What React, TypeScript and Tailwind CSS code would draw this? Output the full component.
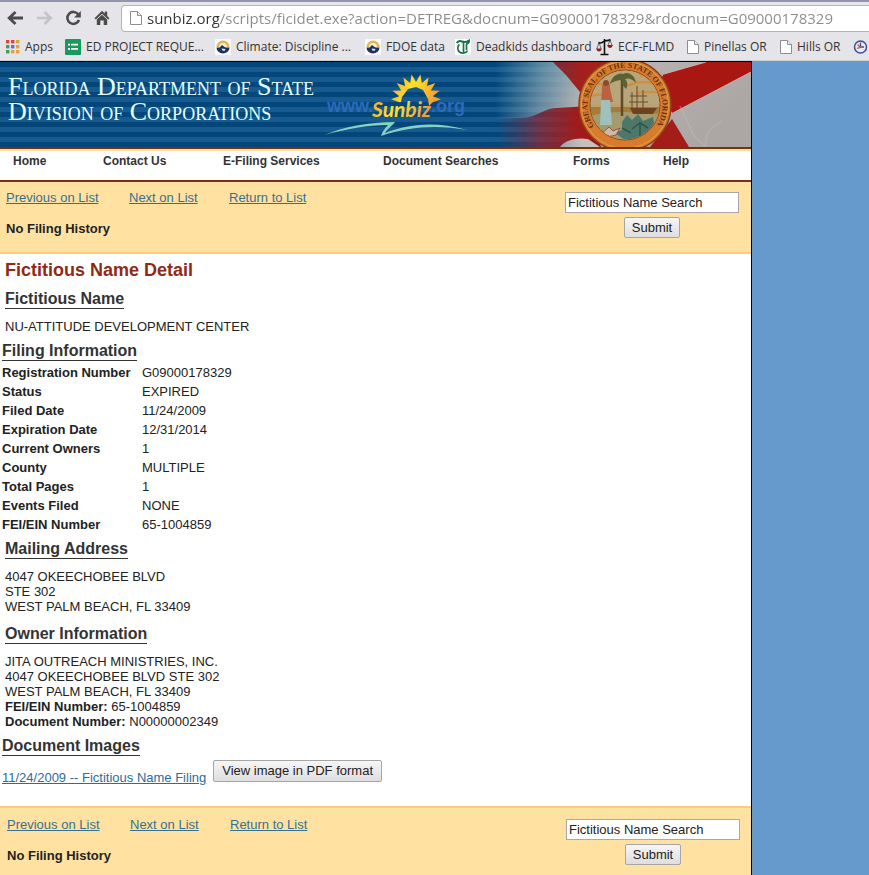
import React from 'react';

const bookmarks = [
    { label: 'Apps', icon: 'apps', width: 'w-[59px]' },
    { label: 'ED PROJECT REQUE...', icon: 'forms', width: 'w-[150px]' },
    { label: 'Climate: Discipline ...', icon: 'fdoe', width: 'w-[150px]' },
    { label: 'FDOE data', icon: 'fdoe', width: 'w-[90px]' },
    { label: 'Deadkids dashboard', icon: 'times', width: 'w-[141px]' },
    { label: 'ECF-FLMD', icon: 'scales', width: 'w-[91px]' },
    { label: 'Pinellas OR', icon: 'page', width: 'w-[93px]' },
    { label: 'Hills OR', icon: 'page', width: 'w-[73px]' },
    { label: '', icon: 'clock', width: 'w-[16px]' },
];

const navItems = [
    { label: 'Home', width: 'w-[90px]' },
    { label: 'Contact Us', width: 'w-[120px]' },
    { label: 'E-Filing Services', width: 'w-[160px]' },
    { label: 'Document Searches', width: 'w-[190px]' },
    { label: 'Forms', width: 'w-[90px]' },
    { label: 'Help', width: 'w-[60px]' },
];

const filing = [
    ['Registration Number', 'G09000178329'],
    ['Status', 'EXPIRED'],
    ['Filed Date', '11/24/2009'],
    ['Expiration Date', '12/31/2014'],
    ['Current Owners', '1'],
    ['County', 'MULTIPLE'],
    ['Total Pages', '1'],
    ['Events Filed', 'NONE'],
    ['FEI/EIN Number', '65-1004859'],
];

const appColors = ['#d9483b', '#d9483b', '#e2a33a', '#4c9a5b', '#3f7fd0', '#e2a33a', '#4c9a5b', '#e2a33a', '#e2a33a'];

function PageIcon() {
    return (
        <svg width="12" height="16" viewBox="0 0 12 16" className="shrink-0">
            <path d="M.5 1.5h7l4 4v9H.5z" fill="#fff" stroke="#8d8d8d" />
            <path d="M7.5 1.5v4h4" fill="#eee" stroke="#8d8d8d" />
        </svg>
    );
}

function BookmarkIcon({ name }: { name: string }) {
    if (name === 'page') return <PageIcon />;
    if (name === 'apps') {
        return (
            <svg width="14" height="14" viewBox="0 0 14 14" className="shrink-0">
                {appColors.map((color, i) => (
                    <rect key={i} x={(i % 3) * 5} y={Math.floor(i / 3) * 5} width="3.4" height="3.4" fill={color} />
                ))}
            </svg>
        );
    }
    if (name === 'forms') {
        return (
            <svg width="16" height="16" viewBox="0 0 16 16" className="shrink-0">
                <rect width="16" height="16" rx="1" fill="#189a5c" />
                <path d="M3 5.7h2M3 9.8h2M6 5.7h7M6 9.8h7" stroke="#fff" strokeWidth="1.8" />
            </svg>
        );
    }
    if (name === 'times') {
        return (
            <svg width="16" height="16" viewBox="0 0 16 16" className="shrink-0">
                <rect width="16" height="16" fill="#fff" />
                <path d="M2 4.2c.5-2.400 3-2.400 5-1.700s4.500.6 7-1c.2 2-1 3.200-3 3.200" fill="none" stroke="#157347" strokeWidth="2" />
                <path d="M4.500 5.500c-2 1-2.500 5.500 0 7.500 2.500 2 7 1 8-1.500M8.500 4v9M11.500 5v6" fill="none" stroke="#157347" strokeWidth="1.700" />
            </svg>
        );
    }
    if (name === 'scales') {
        return (
            <svg width="17" height="18" viewBox="0 0 17 18" className="shrink-0">
                <path d="M8.500 1v15M4.500 16.500h8M2.500 4.500c3 1.500 4-.5 6-1.500s3 .5 6-1.500" fill="none" stroke="#111" strokeWidth="1.600" />
                <path d="M3 4.500L.8 11M3 4.500L5.200 11M14 2l-2.200 6M14 2l2.200 6" fill="none" stroke="#333" strokeWidth=".7" />
                <path d="M.3 10.500h5.400c-.4 4-5 4-5.400 0zM11.300 7h5.400c-.4 4-5 4-5.400 0z" fill="#8c1d18" />
            </svg>
        );
    }
    if (name === 'clock') {
        return (
            <svg width="16" height="16" viewBox="0 0 16 16" className="shrink-0">
                <circle cx="7.500" cy="8" r="6" fill="#e8eaf8" stroke="#3d4f91" strokeWidth="1.500" />
                <path d="M7.500 3.500V8H11" fill="none" stroke="#3d4f91" strokeWidth="1.300" />
                <path d="M4.500 5.500l3 3-3.500.8" fill="none" stroke="#d0582f" strokeWidth="1.300" />
            </svg>
        );
    }
    return (
        <svg width="16" height="16" viewBox="0 0 16 16" className="shrink-0">
            <rect width="16" height="16" fill="#fafafa" />
            <path d="M1.500 8a6.500 6.500 0 0113 0z" fill="#e0b552" />
            <path d="M4 8a4 4 0 018 0z" fill="#f5ecd0" />
            <path d="M1.500 8.500h3L7 6l2.500 2 1.500.5h3.500a6.500 6 0 01-13 0z" fill="#1d3263" />
            <path d="M6.500 9.500l4 .5-1 2-2-.5z" fill="#e8e8ee" />
        </svg>
    );
}

function BrowserBar() {
    return (
        <header className="bg-[#e5e4e8] border-t-2 border-[#9395ac] font-['Open_Sans',sans-serif]">
            <div className="flex items-center h-8 pl-[6px]">
                <button aria-label="Back" className="w-[30px]">
                    <svg width="18" height="16" viewBox="0 0 18 16">
                        <path d="M17 8H4M9.500 2L3.200 8l6.300 6" fill="none" stroke="#4b4b4b" strokeWidth="2.800" />
                    </svg>
                </button>
                <button aria-label="Forward" className="w-[29px]">
                    <svg width="18" height="16" viewBox="0 0 18 16">
                        <path d="M1 8h13M8.500 2l6.300 6-6.300 6" fill="none" stroke="#c4c4c6" strokeWidth="2.600" />
                    </svg>
                </button>
                <button aria-label="Reload" className="w-[29px]">
                    <svg width="17" height="16" viewBox="0 0 17 16">
                        <path d="M13.300 4.500A6 6 0 1014 10" fill="none" stroke="#4b4b4b" strokeWidth="2.600" />
                        <path d="M15.800 1v6.500H9z" fill="#4b4b4b" />
                    </svg>
                </button>
                <button aria-label="Home" className="w-[27px]">
                    <svg width="16" height="16" viewBox="0 0 16 16">
                        <path d="M8 .8L.5 8.300l1.300 1.200L8 3.700l6.200 5.800 1.300-1.200-2.300-2.300V1.500h-2.400v2z" fill="#4b4b4b" />
                        <path d="M2.800 9.500L8 4.800l5.200 4.700V15H9.700v-4.500H6.300V15H2.800z" fill="#4b4b4b" />
                    </svg>
                </button>
                <div className="flex items-center flex-1 min-w-0 h-[27px] pl-2 bg-white border border-r-0 border-[#b4b3b8] rounded-l-sm">
                    <PageIcon />
                    <input
                        aria-label="Address"
                        type="text"
                        defaultValue="sunbiz.org/scripts/ficidet.exe?action=DETREG&docnum=G09000178329&rdocnum=G09000178329"
                        className="flex-1 min-w-0 ml-[5px] text-[15px] leading-6 text-transparent bg-clip-text bg-[linear-gradient(90deg,#333_72px,#8b8b8b_72px)] outline-none"
                    />
                </div>
            </div>
            <nav className="flex items-center h-[27px] pl-[6px] pb-px overflow-hidden border-b border-[#c9d0d6]">
                {bookmarks.map((b, i) => (
                    <a key={i} href="#" aria-label={b.label || 'Bookmark'} className={`flex items-center shrink-0 gap-[5px] ${b.width} text-[12px] leading-4 text-[#333] whitespace-nowrap`}>
                        <BookmarkIcon name={b.icon} />
                        {b.label}
                    </a>
                ))}
            </nav>
        </header>
    );
}

// Pointed rays around the half sun in the logo
const rays = Array.from({ length: 21 }, (_, i) => {
    const angle = Math.PI * (1.06 - (i / 20) * 1.12);
    const r = i % 2 === 0 ? 17 : 25;
    return `${416 + r * Math.cos(angle)},${37 - r * Math.sin(angle)}`;
}).join(' ');

function BannerArt() {
    return (
        <svg viewBox="0 0 751 85" preserveAspectRatio="xMaxYMid slice" className="absolute inset-0 w-full h-full" aria-hidden="true">
            <defs>
                <linearGradient id="flagFade" x1="0" x2="1">
                    <stop offset="0" stopColor="#fff" stopOpacity="0" />
                    <stop offset=".18" stopColor="#fff" stopOpacity=".6" />
                    <stop offset=".34" stopColor="#fff" />
                </linearGradient>
                <mask id="flagMask">
                    <rect x="495" width="256" height="85" fill="url(#flagFade)" />
                </mask>
                <linearGradient id="cloth" x1="0" x2="1" y2=".4">
                    <stop offset="0" stopColor="#7fb0bd" />
                    <stop offset=".45" stopColor="#b9b4b3" />
                    <stop offset="1" stopColor="#aca6a4" />
                </linearGradient>
                <linearGradient id="red" x1="0" x2="1">
                    <stop offset="0" stopColor="#7d2c3e" />
                    <stop offset=".4" stopColor="#b3201f" />
                    <stop offset="1" stopColor="#9f1512" />
                </linearGradient>
                <linearGradient id="sun" x1="0" x2="1" y2=".3">
                    <stop offset="0" stopColor="#f39a32" />
                    <stop offset=".5" stopColor="#ffe32a" />
                    <stop offset="1" stopColor="#f3a032" />
                </linearGradient>
            </defs>
            <g mask="url(#flagMask)">
                <rect x="495" width="256" height="85" fill="url(#cloth)" />
                <path d="M553 0h58l12 40-43-10-14-17z" fill="#a51f1c" />
                <path d="M664 12L706 0h45v10l-78 41-22-20z" fill="#a91713" />
                <path d="M495 58c18-3 28-1 38-4 8-3 14-8 24-8 10-1 22-1 32-2l12 41h-106z" fill="url(#red)" />
                <path d="M560 85c4-7 18-10 28-8l12 8z" fill="#c5bfbd" />
                <path d="M650 85l22-28 17 28z" fill="#a51d18" />
                <path d="M680 44l14 30 12 11M706 85c-2-12 4-20 16-26" fill="none" stroke="#c4bfbd" strokeWidth="1.500" opacity=".4" />
                <path d="M706 0l-42 12M751 10l-78 41" stroke="#d6a9a4" strokeWidth="1" />
            </g>
            <circle cx="625" cy="43" r="46" fill="#d77c2d" stroke="#8d3f19" strokeWidth="1.500" />
            <circle cx="625" cy="43" r="43.500" fill="none" stroke="#e8a14c" strokeWidth="1" />
            <circle cx="625" cy="43" r="35" fill="#b9a173" stroke="#8f4a1c" strokeWidth="1" />
            <clipPath id="sealClip"><circle cx="625" cy="43" r="34.500" /></clipPath>
            <g clipPath="url(#sealClip)">
                <path d="M590 8h70v34h-70z" fill="#b9a57a" />
                <path d="M628 24c12-8 22 0 34-6M640 14c8-3 14 4 20 2M636 32c8-4 16 0 24-3M592 24c8-4 14 0 18-4M592 34c6-3 8 0 12-2" fill="none" stroke="#d1903f" strokeWidth="2.500" />
                <path d="M590 45h70v10h-70z" fill="#a47c3a" />
                <path d="M590 54c20-6 46-4 70-2v30h-70z" fill="#a39a70" />
                <path d="M622 16v38" stroke="#5f4a26" strokeWidth="2.500" />
                <path d="M610 22c2-9 10-12 13-10 6-3 12 2 13 9-5-5-8-5-11-4 3 3 3 7 1 10-3-3-5-6-4-9-4 0-8 1-12 4z" fill="#5b6134" />
                <path d="M637 24v24M643 28v20M632 30v18M630 34h17M629 40h19" stroke="#6b4a25" strokeWidth="1" />
                <path d="M630 46h27l-4 6h-20z" fill="#70401f" />
                <path d="M602 26c0-8 9-8 8 0l3 14h-12z" fill="#bd6240" />
                <path d="M601 38h9l2 25h-12z" fill="#9fc0bb" />
                <circle cx="606" cy="21" r="3" fill="#8d4a2e" />
                <path d="M622 60l5-7 5 5 6-6 5 7 10-4 2 12-8 13-22-2-10-7 7-3z" fill="#4d7768" />
                <path d="M632 67l8-6 8 5M640 61v13M622 66l9 5" fill="none" stroke="#2f5648" strokeWidth="1.500" />
                <path d="M601 72l8-7 4 4 7-3-4 7-9 2z" fill="#d2b7a4" stroke="#7d3827" strokeWidth=".7" />
            </g>
            <path id="sealRing" d="M601.500 72.500a37.500 37.500 0 1147 0" fill="none" />
            <text fontFamily="Liberation Serif, serif" fontSize="8" fontWeight="bold" fill="#6b2f14">
                <textPath href="#sealRing" startOffset="11">GREAT SEAL OF THE STATE OF FLORIDA</textPath>
            </text>

            <polygon points={`${rays} 429,44 428,37 423,28 416,25 408,27 402,35 401,40`} fill="url(#sun)" />
            <text x="327" y="50" fontFamily="Liberation Sans, sans-serif" fontSize="18" fontWeight="bold" fill="#2c6abb">www.</text>
            <text x="431" y="50" fontFamily="Liberation Sans, sans-serif" fontSize="18" fontWeight="bold" fill="#2c6abb">.org</text>
            <text x="372" y="55" fontFamily="Lato, sans-serif" fontSize="21" fontWeight="bold" fontStyle="italic" fill="url(#sun)">Sunbiz</text>
            <path d="M324 73c20-8 44-13 71-13-3 4-7 6-10 11 20-8 48-13 82-3-29-5-57-4-86 6 1-4 4-8 7-11-20 0-42 4-64 10z" fill="#83d2c2" />
        </svg>
    );
}

function Banner() {
    return (
        <div className="relative h-[85px] overflow-hidden bg-[repeating-linear-gradient(180deg,#03477a_0px,#03477a_5px,#165a90_5px,#165a90_10px)]">
            <BannerArt />
            <div className="relative pl-2 pt-3 font-['Liberation_Serif',serif] text-[#e4ffff] [font-variant:small-caps] whitespace-nowrap">
                <p className="text-[26px] leading-[25px]">Florida Department of State</p>
                <p className="text-[26px] leading-[25px]">Division of Corporations</p>
            </div>
        </div>
    );
}

function ListBar({ className }: { className: string }) {
    return (
        <div className={`flex justify-between bg-[#ffe2a2] ${className}`}>
            <div className="pt-2">
                <div className="grid grid-cols-[123px_100px_auto] leading-4 text-[#37708f]">
                    <a href="#" className="underline">Previous on List</a>
                    <a href="#" className="underline">Next on List</a>
                    <a href="#" className="underline">Return to List</a>
                </div>
                <p className="mt-[15px] font-bold leading-4">No Filing History</p>
            </div>
            <form className="flex flex-col items-center gap-1 pt-[10px]" onSubmit={(e) => e.preventDefault()}>
                <input aria-label="Fictitious Name Search" type="text" defaultValue="Fictitious Name Search" className="w-[174px] h-[21px] px-[2px] bg-white border border-[#a9a9a9]" />
                <button type="submit" className="h-[21px] px-[7px] leading-4 border border-[#a6a6a6] rounded-xs bg-linear-to-b from-[#f6f6f6] to-[#dedede]">Submit</button>
            </form>
        </div>
    );
}

function SectionTitle({ children }: { children: React.ReactNode }) {
    return <h2 className="w-fit text-base font-bold leading-[18px] text-[#333] border-b border-[#333]">{children}</h2>;
}

export default function App() {
    return (
        <div className="flex flex-col min-h-screen bg-[#6699cc] font-['Liberation_Sans',Arial,sans-serif] text-[13px] text-[#222]">
            <BrowserBar />
            <div className="flex flex-col flex-1 w-full max-w-[752px] bg-white border-t border-r border-black">
                <Banner />
                <nav className="flex h-[35px] pl-[13px] pt-1 border-t-2 border-b-2 border-[#7a3112] text-[12px] font-bold leading-4 text-[#333] shadow-[inset_0_2px_0_#fde0a4]">
                    {navItems.map((item) => (
                        <a key={item.label} href="#" className={`${item.width} whitespace-nowrap`}>{item.label}</a>
                    ))}
                </nav>
                <ListBar className="h-[72px] pl-[6px] pr-3 border-b-2 border-[#f8cd80]" />

                <main className="pb-5">
                    <h1 className="pt-1 pl-[5px] text-lg font-bold leading-6 text-[#8f2a14]">Fictitious Name Detail</h1>
                    <section className="pl-[5px] pt-2">
                        <SectionTitle>Fictitious Name</SectionTitle>
                        <p className="mt-[10px] leading-[15px]">NU-ATTITUDE DEVELOPMENT CENTER</p>
                    </section>
                    <section className="pl-[2px] pt-2">
                        <SectionTitle>Filing Information</SectionTitle>
                        <table className="mt-[2px] leading-[19px] text-left">
                            <tbody>
                                {filing.map(([label, value]) => (
                                    <tr key={label}>
                                        <th scope="row" className="w-[140px] p-0 font-bold">{label}</th>
                                        <td className="p-0">{value}</td>
                                    </tr>
                                ))}
                            </tbody>
                        </table>
                    </section>
                    <section className="pl-[5px] pt-[6px]">
                        <SectionTitle>Mailing Address</SectionTitle>
                        <address className="mt-[10px] not-italic leading-[15px]">
                            4047 OKEECHOBEE BLVD<br />
                            STE 302<br />
                            WEST PALM BEACH, FL 33409
                        </address>
                    </section>
                    <section className="pl-[5px] pt-[11px]">
                        <SectionTitle>Owner Information</SectionTitle>
                        <p className="mt-[10px] leading-[15px]">
                            JITA OUTREACH MINISTRIES, INC.<br />
                            4047 OKEECHOBEE BLVD STE 302<br />
                            WEST PALM BEACH, FL 33409<br />
                            <b>FEI/EIN Number:</b> 65-1004859<br />
                            <b>Document Number:</b> N00000002349
                        </p>
                    </section>
                    <section className="pl-[2px] pt-2">
                        <SectionTitle>Document Images</SectionTitle>
                        <div className="flex items-start gap-[7px] mt-1">
                            <a href="#" className="mt-[10px] leading-4 underline text-[#2a6d9c]">11/24/2009 -- Fictitious Name Filing</a>
                            <button className="h-[22px] px-2 leading-4 border border-[#a6a6a6] rounded-xs bg-linear-to-b from-[#f6f6f6] to-[#dedede]">View image in PDF format</button>
                        </div>
                    </section>
                </main>

                <ListBar className="flex-1 pt-px pl-[7px] pr-[11px] border-t-2 border-[#f8cd80]" />
            </div>
        </div>
    );
}
